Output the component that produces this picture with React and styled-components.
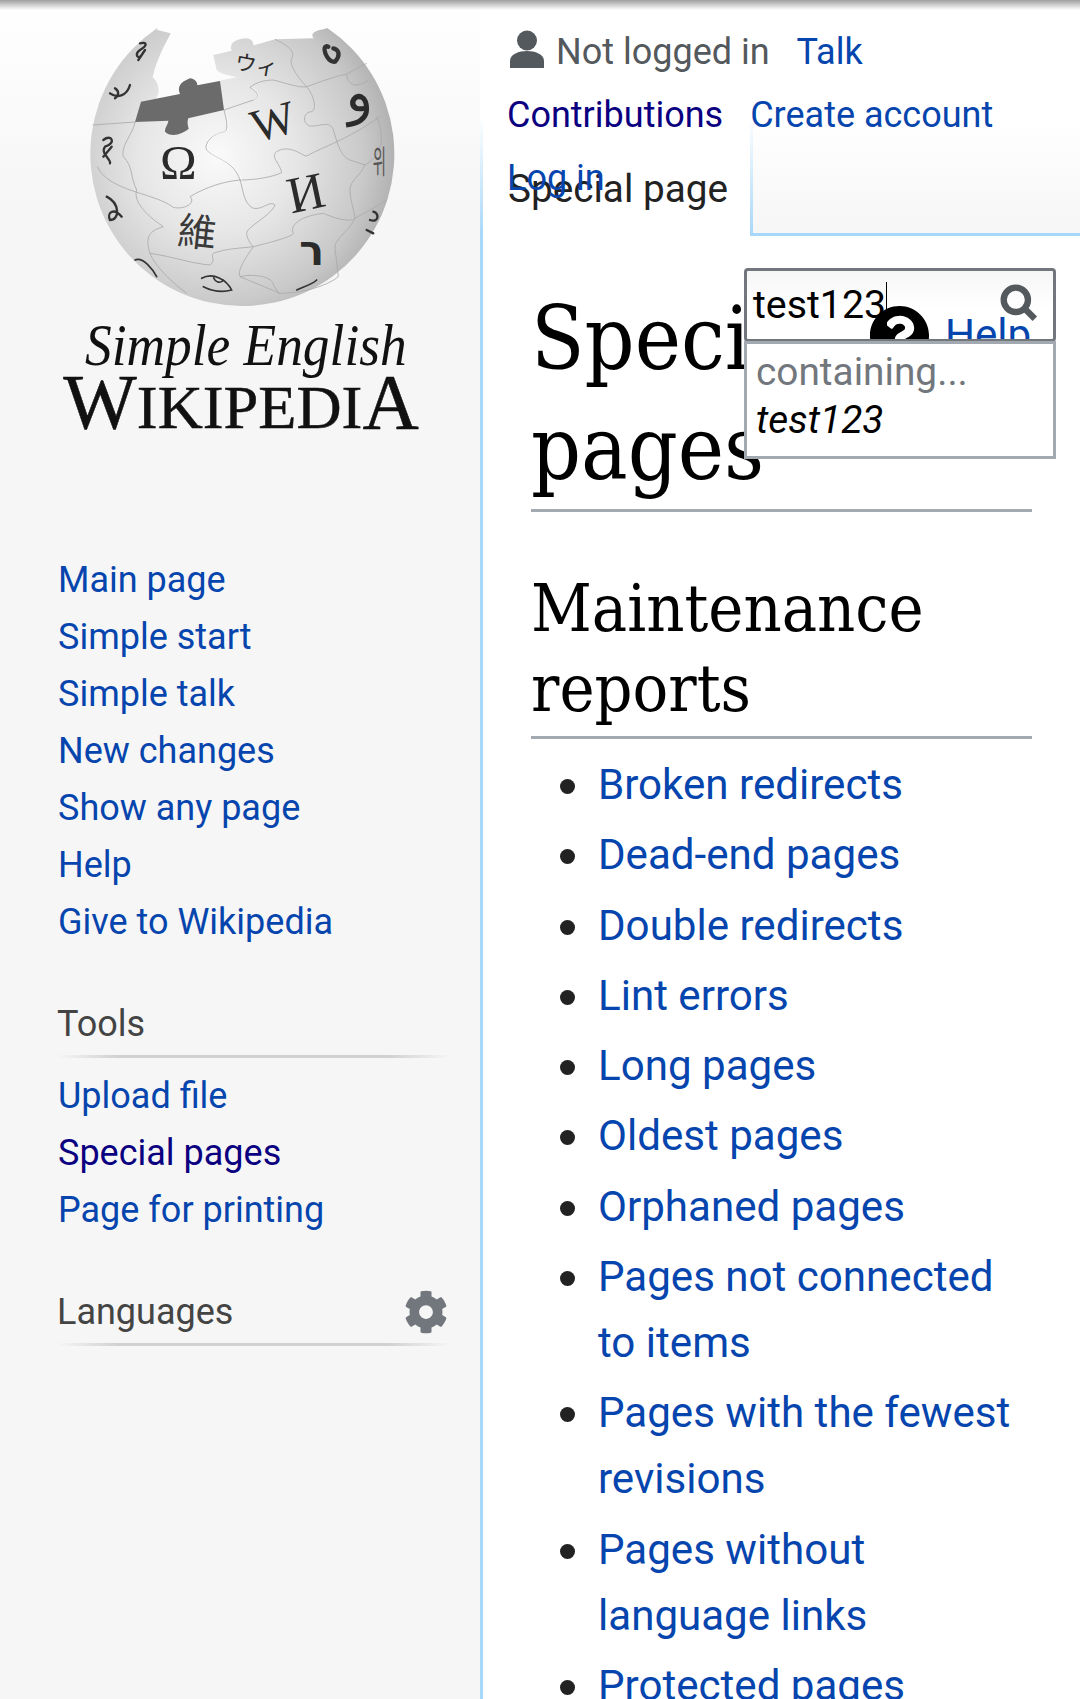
import React from 'react'
import styled, { createGlobalStyle } from 'styled-components'
import { FaCog, FaQuestionCircle } from 'react-icons/fa'

const GlobalStyle = createGlobalStyle`
  html, body {
    margin: 0;
    padding: 0;
    height: 1699px;
    overflow: hidden;
    background: #fff;
    font-family: Roboto, "Liberation Sans", sans-serif;
  }
`

const Page = styled.div`
  display: flex;
  width: 1080px;
  height: 1699px;
  overflow: hidden;
  position: relative;
  background: #fff;
`

const TopShadow = styled.div`
  position: absolute;
  top: 0;
  left: 0;
  right: 0;
  height: 10px;
  background: linear-gradient(#a0a0a0, rgba(255,255,255,0));
  z-index: 5;
`

const Sidebar = styled.aside`
  width: 480px;
  flex: none;
  display: flex;
  flex-direction: column;
  background: linear-gradient(#fff 0, #f6f6f6 200px);
`

const LogoWrap = styled.div`
  padding-left: 40px;
  height: 552px;
`

const Nav = styled.nav`
  padding: 0 0 0 58px;
  display: flex;
  flex-direction: column;
  margin-bottom: ${p => p.$gap || 0}px;
`

const NavLink = styled.a`
  font-size: 36px;
  line-height: 57px;
  color: ${p => (p.$visited ? '#0b0080' : '#0645ad')};
`

const NavHeading = styled.div`
  display: flex;
  justify-content: space-between;
  align-items: center;
  width: 393px;
  height: 57px;
  font-size: 36px;
  color: #444;
  margin: 0 0 16px -1px;
  position: relative;
  svg { color: #72777d; font-size: 44px; margin-right: 2px; }
  &::after {
    content: '';
    position: absolute;
    left: 0;
    right: 0;
    bottom: -6px;
    height: 3px;
    background: linear-gradient(90deg, rgba(208,208,208,0) 0, #d0d0d0 16%, #d0d0d0 84%, rgba(208,208,208,0) 100%);
  }
`

const Main = styled.main`
  flex: 1;
  display: flex;
  flex-direction: column;
  min-width: 0;
  position: relative;
  background: linear-gradient(90deg, #a7d7f9 3px, transparent 3px) 0 236px no-repeat;
  &::before {
    content: '';
    position: absolute;
    top: 116px;
    left: 0;
    width: 3px;
    height: 120px;
    background: linear-gradient(#fff, #a7d7f9);
  }
`

const Head = styled.header`
  height: 236px;
  flex: none;
  display: flex;
  align-items: flex-end;
`

const PageTab = styled.div`
  width: 270px;
  flex: none;
  padding: 0 0 26px 28px;
  box-sizing: border-box;
  font-size: 38.7px;
  line-height: 43px;
  color: #222;
`

const TabFill = styled.div`
  flex: 1;
  height: 119px;
  position: relative;
  background: linear-gradient(#fff, #f6f6f6);
  border-bottom: 3px solid #a7d7f9;
  box-sizing: border-box;
  &::before {
    content: '';
    position: absolute;
    left: 0;
    top: 0;
    bottom: -3px;
    width: 3px;
    background: linear-gradient(#fff, #a7d7f9);
  }
`

const PersonalMenu = styled.ul`
  position: absolute;
  top: 21px;
  left: 27px;
  margin: 0;
  padding: 0;
  list-style: none;
  display: flex;
  flex-wrap: wrap;
  column-gap: 27px;
  width: 500px;
  font-size: 36px;
  line-height: 63px;
  z-index: 1;
`

const PersonalItem = styled.li`
  color: ${p => p.$color || '#0645ad'};
  display: flex;
  align-items: center;
  ${p => p.$break && 'width: 100%;'}
  svg { flex: none; margin: 0 11px 0 2px; position: relative; top: -4px; }
`

const SearchBox = styled.div`
  position: absolute;
  top: 268px;
  left: 264px;
  width: 312px;
  height: 74px;
  box-sizing: border-box;
  border: 3px solid #72777d;
  border-radius: 4px;
  background: linear-gradient(#f6f6f6, #fff 55%);
  overflow: hidden;
  z-index: 2;
`

const SearchText = styled.div`
  padding: 12px 0 0 6px;
  font-size: 39.3px;
  line-height: 44px;
  color: #000;
`

const Caret = styled.span`
  border-right: 1.5px solid #000;
`

const SearchIcon = styled.span`
  position: absolute;
  right: 15px;
  top: 13px;
  color: #54595d;
  line-height: 0;
`

const HelpMark = styled.span`
  position: absolute;
  top: 34px;
  left: 122px;
  font-size: 61px;
  line-height: 0;
  color: #000;
`

const HelpText = styled.a`
  position: absolute;
  top: 40px;
  left: 198px;
  font-size: 42.1px;
  line-height: 47px;
  color: #0645ad;
`

const Suggestions = styled.div`
  position: absolute;
  top: 341px;
  left: 264px;
  width: 312px;
  height: 118px;
  box-sizing: border-box;
  border: 3px solid #a2a9b1;
  background: #fff;
  padding: 4px 9px;
  font-size: 38.8px;
  line-height: 48px;
  z-index: 3;
`

const Containing = styled.div`
  color: #72777d;
`

const Suggestion = styled.div`
  font-style: italic;
  color: #000;
`

const Content = styled.div`
  padding: 48px 48px 0 51px;
  color: #000;
`

const Title = styled.h1`
  margin: 0;
  font-family: "DejaVu Serif Condensed", "DejaVu Serif", serif;
  font-weight: 400;
  font-size: 87px;
  line-height: 110px;
  border-bottom: 3px solid #a2a9b1;
  padding-bottom: 5px;
`

const Section = styled.h2`
  margin: 57px 0 0;
  font-family: "DejaVu Serif Condensed", "DejaVu Serif", serif;
  font-weight: 400;
  font-size: 66px;
  line-height: 80px;
  border-bottom: 3px solid #a2a9b1;
  padding-bottom: 7px;
`

const ReportList = styled.ul`
  margin: 13px 0 0;
  padding: 0 0 0 67px;
  list-style: none;
  font-size: 42.1px;
  line-height: 66px;
`

const Report = styled.li`
  margin-bottom: 4.3px;
  position: relative;
  &::before {
    content: '';
    position: absolute;
    left: -38px;
    top: 27px;
    width: 15px;
    height: 15px;
    border-radius: 50%;
    background: #222;
  }
`

const ReportLink = styled.a`
  color: #0645ad;
`

const navLinks = ['Main page', 'Simple start', 'Simple talk', 'New changes', 'Show any page', 'Help', 'Give to Wikipedia']

const reports = [
  'Broken redirects',
  'Dead-end pages',
  'Double redirects',
  'Lint errors',
  'Long pages',
  'Oldest pages',
  'Orphaned pages',
  'Pages not connected to items',
  'Pages with the fewest revisions',
  'Pages without language links',
  'Protected pages',
]

const UserIcon = () => (
  <svg width="36" height="38" viewBox="0 0 36 38" fill="currentColor">
    <circle cx="18" cy="10.5" r="10" />
    <path d="M1,38 V31 C1,24 10,21 18,21 C26,21 35,24 35,31 V38 Z" />
  </svg>
)

const MagnifierIcon = () => (
  <svg width="38" height="38" viewBox="0 0 36 36" fill="none" stroke="currentColor" strokeWidth="6">
    <circle cx="15" cy="15" r="11.5" />
    <path d="M23,23 L33,33" />
  </svg>
)

const Logo = () => (
  <svg width="420" height="460" viewBox="0 0 1260 1380">
    <defs>
      <radialGradient id="ball" gradientUnits="userSpaceOnUse" cx="530" cy="470" r="590">
        <stop offset="0" stopColor="#fafafa" />
        <stop offset="0.4" stopColor="#e6e6e6" />
        <stop offset="0.75" stopColor="#c9c9c9" />
        <stop offset="1" stopColor="#a4a4a4" />
      </radialGradient>
    </defs>
    <path
      fill="url(#ball)"
      d="M352,90 L392,100 C378,130 352,170 338,232 C358,250 362,280 345,300 L300,305 L420,282 C412,262 418,248 450,235 C470,238 472,250 472,256 L590,232 C570,225 545,225 530,210 L520,165 L575,152 C565,130 590,115 620,115 C640,118 640,130 640,136 L705,118 L822,115 C810,105 820,92 850,88 L862,84 A456,456 0 1 1 352,84 Z"
    />
    <path
      fill="#6b6b6b"
      d="M303,305 L420,282 C412,262 418,248 450,235 C470,238 472,250 472,256 L540,243 L552,330 L445,355 C440,368 445,380 446,386 C430,400 395,415 375,395 C375,380 385,372 385,362 L285,366 Z"
    />
    <g fill="none" stroke="#aaa" strokeWidth="2.5">
      <path d="M158,375 L285,366 C280,400 240,440 250,470 C280,500 270,530 290,570 C280,600 310,640 370,680 C340,690 310,700 330,760 C345,800 400,850 440,880" />
      <path d="M172,500 C190,540 240,560 285,575 C330,590 370,600 400,622 C430,630 470,610 450,590 C500,560 550,545 600,540 C650,540 700,530 725,518 C720,490 690,470 710,455 C750,430 790,470 800,468 C850,440 920,420 1020,350" />
      <path d="M552,330 C560,360 565,385 555,395 C520,400 490,430 500,450 C530,480 580,480 600,540 C610,570 610,610 640,625 C670,630 690,600 705,615 C690,650 620,680 620,700 C620,720 640,740 640,740 C620,770 590,810 600,830 C640,820 700,830 700,855 L718,882" />
      <path d="M330,760 C400,770 450,790 510,795 C530,780 510,770 520,760 C560,745 600,745 640,740 C680,730 760,710 760,700 C750,680 770,650 850,640 C870,650 930,670 945,655 C970,640 1010,620 1040,600" />
      <path d="M552,330 L640,300 C665,290 650,275 630,262 C650,245 680,240 700,240 C740,250 780,265 800,260 C830,250 880,230 920,222 L980,190" />
      <path d="M800,260 C825,290 830,330 815,335 C790,335 785,370 810,378 C840,380 870,360 880,390 C890,420 900,470 930,480 L975,495 C960,530 930,540 930,570 C930,600 945,640 945,655 C930,690 880,720 885,745 L895,830" />
      <path d="M705,118 C730,130 770,150 755,175 C745,195 780,240 800,260" />
      <path d="M920,222 C920,250 945,270 985,240" />
      <path d="M1010,350 C1040,420 1020,470 975,495" />
      <path d="M600,830 L720,880 C780,880 860,860 895,830" />
    </g>
    <path fill="none" stroke="#fff" strokeWidth="3" d="M560,338 C565,380 570,390 555,395 C520,400 495,430 505,452 C530,480 585,482 605,540 M640,300 C665,290 655,275 635,262" opacity="0.6" />
    <g fontFamily={'"Liberation Serif", serif'} fill="#2b2b2b" textAnchor="middle">
      <text x="415" y="538" fontSize="148">Ω</text>
      <text x="698" y="412" fontSize="140" transform="rotate(-16 698 360)">W</text>
      <text x="796" y="630" fontSize="154" transform="rotate(-12 796 570)">И</text>
      <text x="472" y="738" fontSize="116" fill="#3a3a3a" fontFamily={'"Noto Sans CJK SC", sans-serif'} transform="rotate(6 472 690)">維</text>
      <text x="650" y="218" fontSize="64" fontFamily={'"Noto Sans CJK JP", sans-serif'} transform="rotate(10 650 190)">ウィ</text>
      <text transform="translate(1018 518) scale(0.45 1)" fontSize="96" fill="#555" fontFamily={'"Noto Sans CJK KR", sans-serif'}>위</text>
      <text x="955" y="335" fontSize="170" fontFamily={'"DejaVu Sans", sans-serif'} transform="rotate(-8 955 290)">و</text>
      <text x="815" y="795" fontSize="124" fontWeight="700" fontFamily={'"DejaVu Sans", sans-serif'}>ר</text>
    </g>
    <g fill="none" stroke="#333" strokeWidth="7" strokeLinecap="round">
      <path d="M300,130 C320,125 325,135 300,150 C285,160 290,175 300,170 M315,150 L295,180" />
      <path d="M210,280 C230,295 260,290 270,255 M225,265 C235,270 240,285 225,295" />
      <path d="M190,420 C215,400 230,430 195,440 C180,460 215,480 210,490 M215,440 L190,470" />
      <path d="M200,590 C240,610 240,660 210,660 C200,640 220,620 245,650" />
      <path d="M485,835 C520,815 560,840 575,870 C540,880 510,870 490,860 M520,830 C525,850 545,850 550,840" strokeWidth="5" />
      <path d="M285,780 C310,770 340,810 350,830" strokeWidth="5" />
      <path d="M865,140 C840,130 860,190 885,185 C900,170 900,150 880,145" strokeWidth="13" />
      <path d="M1000,635 C1020,640 1015,670 990,660 M980,690 L1000,700" />
      <path d="M770,870 C790,860 815,855 830,840" strokeWidth="5" />
    </g>
    <text
      x="135"
      y="1096"
      fontFamily={'"Liberation Serif", serif'}
      fontStyle="italic"
      fontSize="178"
      fill="#111"
      textLength="965"
      lengthAdjust="spacingAndGlyphs"
    >
      Simple English
    </text>
    <text
      x="70"
      y="1285"
      fontFamily={'"Liberation Serif", serif'}
      fill="#111"
      stroke="#111"
      strokeWidth="1.5"
      fontSize="186"
      textLength="1066"
      lengthAdjust="spacingAndGlyphs"
    >
      <tspan fontSize="232">W</tspan>IKIPEDI<tspan fontSize="232">A</tspan>
    </text>
  </svg>
)

export default function App() {
  return (
    <Page>
      <GlobalStyle />
      <TopShadow />
      <Sidebar>
        <LogoWrap>
          <Logo />
        </LogoWrap>
        <Nav $gap={44}>
          {navLinks.map(link => (
            <NavLink key={link}>{link}</NavLink>
          ))}
        </Nav>
        <Nav $gap={44}>
          <NavHeading>Tools</NavHeading>
          <NavLink>Upload file</NavLink>
          <NavLink $visited>Special pages</NavLink>
          <NavLink>Page for printing</NavLink>
        </Nav>
        <Nav>
          <NavHeading>
            Languages
            <FaCog />
          </NavHeading>
        </Nav>
      </Sidebar>
      <Main>
        <PersonalMenu>
          <PersonalItem $color="#54595d">
            <UserIcon />
            Not logged in
          </PersonalItem>
          <PersonalItem>Talk</PersonalItem>
          <PersonalItem $color="#0b0080">Contributions</PersonalItem>
          <PersonalItem>Create account</PersonalItem>
          <PersonalItem $break>Log in</PersonalItem>
        </PersonalMenu>
        <Head>
          <PageTab>Special page</PageTab>
          <TabFill />
        </Head>
        <SearchBox>
          <SearchText>
            test123
            <Caret />
          </SearchText>
          <HelpMark>
            <FaQuestionCircle />
          </HelpMark>
          <HelpText>Help</HelpText>
          <SearchIcon>
            <MagnifierIcon />
          </SearchIcon>
        </SearchBox>
        <Suggestions>
          <Containing>containing...</Containing>
          <Suggestion>test123</Suggestion>
        </Suggestions>
        <Content>
          <Title>Special pages</Title>
          <Section>Maintenance reports</Section>
          <ReportList>
            {reports.map(report => (
              <Report key={report}>
                <ReportLink>{report}</ReportLink>
              </Report>
            ))}
          </ReportList>
        </Content>
      </Main>
    </Page>
  )
}
